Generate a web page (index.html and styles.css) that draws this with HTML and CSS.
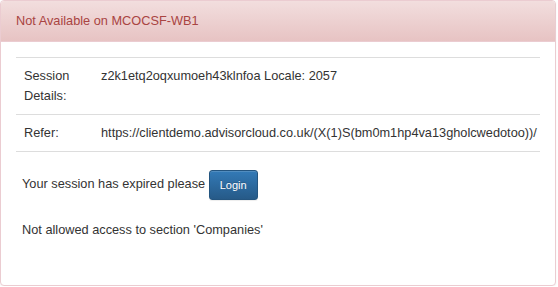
FILE: index.html
```
<!DOCTYPE html>
<html lang="en">
<head>
  <meta charset="UTF-8" />
  <title>Not Available</title>
  <link rel="stylesheet" href="styles.css">
</head>
<body>
  <div class="panel panel-danger">
    <div class="panel-heading">Not Available on MCOCSF-WB1</div>
    <div class="panel-body">
      <table class="table">
        <tr>
          <td class="label-cell">Session Details:</td>
          <td>z2k1etq2oqxumoeh43klnfoa Locale: 2057</td>
        </tr>
        <tr>
          <td class="label-cell">Refer:</td>
          <td>https://clientdemo.advisorcloud.co.uk/(X(1)S(bm0m1hp4va13gholcwedotoo))/</td>
        </tr>
      </table>
      <p class="expired">Your session has expired please <button class="btn btn-primary btn-sm">Login</button></p>
      <p class="denied">Not allowed access to section 'Companies'</p>
    </div>
  </div>
</body>
</html>
```

FILE: styles.css
```
body {
  margin: 0;
  padding: 0;
  background-color: #fff;
  font-family: "Liberation Sans", Arial, sans-serif;
  font-size: 12.75px;
  line-height: 20px;
  color: #333;
}

.panel {
  width: 554px;
  background-color: #fff;
  border: 1px solid #ebccd1;
  border-radius: 4px;
  box-shadow: 0 1px 2px rgba(0, 0, 0, 0.05);
}

.panel-heading {
  padding: 10px 15px;
  color: #a94442;
  background-image: linear-gradient(to bottom, #f2dede 0%, #e7c3c3 100%);
  border-bottom: 1px solid #ebccd1;
  border-top-left-radius: 3px;
  border-top-right-radius: 3px;
}

.panel-body {
  padding: 15px 15px 45px;
}

.table {
  width: 100%;
  border-collapse: collapse;
  table-layout: fixed;
  margin-bottom: 18px;
}

.table td {
  padding: 8px;
  vertical-align: top;
  border-top: 1px solid #ddd;
}

.table tr:last-child td {
  border-bottom: 1px solid #ddd;
}

.label-cell {
  width: 61px;
}

.expired {
  margin: 0 0 20px;
  padding-left: 6px;
}

.denied {
  margin: 0;
  padding-left: 6px;
}

.btn {
  font-family: inherit;
  cursor: pointer;
  vertical-align: middle;
}

.btn-sm {
  padding: 5px 10px;
  font-size: 11px;
  line-height: 18px;
  border-radius: 3px;
}

.btn-primary {
  color: #fff;
  background-image: linear-gradient(to bottom, #337ab7 0%, #265a88 100%);
  border: 1px solid #245580;
  box-shadow: inset 0 1px 0 rgba(255, 255, 255, 0.15), 0 1px 1px rgba(0, 0, 0, 0.075);
  text-shadow: 0 -1px 0 rgba(0, 0, 0, 0.2);
}
```
